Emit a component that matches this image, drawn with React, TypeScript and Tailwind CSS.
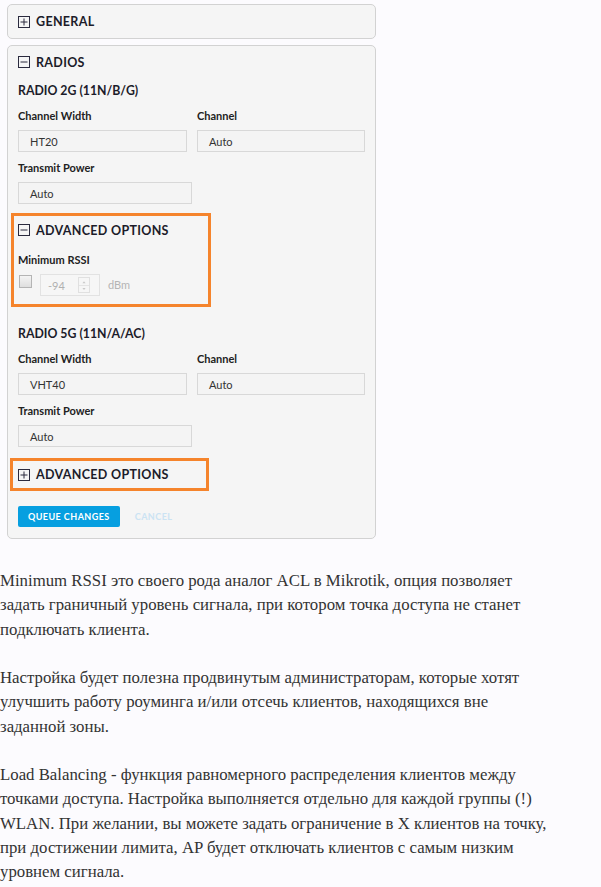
import type { ReactNode } from 'react';

function ToggleIcon({ open }: { open: boolean }) {
  return (
    <svg width="12" height="12" viewBox="0 0 12 12" className="shrink-0">
      <rect x="0.5" y="0.5" width="11" height="11" fill="none" stroke="#2a2a3e" strokeWidth="1" />
      <line x1="2.5" y1="6" x2="9.5" y2="6" stroke="#2a2a3e" strokeWidth="1" />
      {!open && <line x1="6" y1="2.5" x2="6" y2="9.5" stroke="#2a2a3e" strokeWidth="1" />}
    </svg>
  );
}

function SectionTitle({ open, children }: { open: boolean; children: ReactNode }) {
  return (
    <div className="h-[12px] flex items-center gap-[6px] text-[12.5px] font-bold tracking-[0.025em] text-[#1c1c2a] leading-none">
      <ToggleIcon open={open} />
      <span className="pt-[2px]">{children}</span>
    </div>
  );
}

function Label({ children }: { children: ReactNode }) {
  return <div className="h-[12px] flex items-center text-[11px] font-bold text-[#222] leading-none">{children}</div>;
}

function Field({ value, width }: { value: string; width: string }) {
  return (
    <div className={`${width} h-[22px] border border-[#d8d8d8] bg-[#f4f4f4] flex items-center pl-[11px] text-[11px] text-[#333] leading-none`}>
      {value}
    </div>
  );
}

function Radio({ title, width }: { title: string; width: string }) {
  return (
    <div>
      <div className="h-[14px] flex items-center text-[12.3px] font-bold text-[#1c1c2a] leading-none">{title}</div>
      <div className="grid grid-cols-[169px_168px] gap-x-[10px] mt-[11px]">
        <Label>Channel Width</Label>
        <Label>Channel</Label>
        <div className="mt-[9px]">
          <Field value={width} width="w-[169px]" />
        </div>
        <div className="mt-[9px]">
          <Field value="Auto" width="w-[168px]" />
        </div>
      </div>
      <div className="mt-[9px]">
        <Label>Transmit Power</Label>
        <div className="mt-[9px]">
          <Field value="Auto" width="w-[174px]" />
        </div>
      </div>
    </div>
  );
}

export default function App() {
  return (
    <div className="min-h-[887px] bg-[#fcfbfe] pt-[4px]" style={{ fontFamily: 'Lato, "Noto Sans", sans-serif' }}>
      <div className="ml-[7px] w-[369px]">
        <div className="h-[35px] rounded-[5px] border border-[#d2d2d2] bg-[#f5f5f5] px-[10px] flex items-center">
          <SectionTitle open={false}>GENERAL</SectionTitle>
        </div>

        <div className="mt-[6px] rounded-[5px] border border-[#d2d2d2] bg-[#f5f5f5] px-[10px] pt-[10px] pb-[11px]">
          <SectionTitle open>RADIOS</SectionTitle>
          <div className="mt-[16px]">
            <Radio title="RADIO 2G (11N/B/G)" width="HT20" />
          </div>

          <div className="mt-[9px] -ml-[7px] w-[200px] border-[3px] border-[#f5842c] px-[4px] pt-[8px] pb-[8px]">
            <SectionTitle open>ADVANCED OPTIONS</SectionTitle>
            <div className="mt-[17px]">
              <Label>Minimum RSSI</Label>
            </div>
            <div className="mt-[9px] flex items-start gap-[8px]">
              <div className="mt-[1px] ml-px w-[13px] h-[13px] border border-[#b4b4b4] bg-gradient-to-b from-[#f4f4f4] to-[#dedede]" />
              <div className="w-[60px] h-[22px] border border-[#e2e2e2] bg-[#f6f6f6] flex items-center pl-[7px] text-[11px] text-[#b0b0b0] leading-none">
                <span className="flex-1">-94</span>
                <div className="mr-[9px] w-[12px] h-[16px] border border-[#e0e0e0] flex flex-col">
                  <svg viewBox="0 0 12 8" className="w-[10px] h-[7px] mx-auto mt-[0.5px]"><path d="M4 5.5 L6 3 L8 5.5 Z" fill="#c8c8c8" /></svg>
                  <div className="h-px bg-[#e4e4e4]" />
                  <svg viewBox="0 0 12 8" className="w-[10px] h-[7px] mx-auto"><path d="M4 2.5 L6 5 L8 2.5 Z" fill="#c8c8c8" /></svg>
                </div>
              </div>
              <span className="mt-[5px] text-[11px] text-[#b4b4b4] leading-none">dBm</span>
            </div>
          </div>

          <div className="mt-[20px]">
            <Radio title="RADIO 5G (11N/A/AC)" width="VHT40" />
          </div>

          <div className="mt-[11px] -ml-[8px] w-[199px] h-[33px] border-[3px] border-[#f5842c] px-[5px] flex items-center">
            <SectionTitle open={false}>ADVANCED OPTIONS</SectionTitle>
          </div>

          <div className="mt-[15px] flex items-center gap-[15px]">
            <button className="h-[21px] px-[10px] rounded-[2px] bg-[#069fe0] text-white text-[9px] font-bold tracking-[0.05em] leading-none">
              QUEUE CHANGES
            </button>
            <span className="text-[9px] font-bold tracking-[0.05em] text-[#cbe3f3] leading-none">CANCEL</span>
          </div>
        </div>
      </div>

      <div
        className="mt-[30px] text-[16.8px] leading-[24.25px] text-[#333] space-y-[24.25px] whitespace-nowrap"
        style={{ fontFamily: '"Liberation Serif", "DejaVu Serif", serif' }}
      >
        <p>
          Minimum RSSI это своего рода аналог ACL в Mikrotik, опция позволяет
          <br />
          задать граничный уровень сигнала, при котором точка доступа не станет
          <br />
          подключать клиента.
        </p>
        <p>
          Настройка будет полезна продвинутым администраторам, которые хотят
          <br />
          улучшить работу роуминга и/или отсечь клиентов, находящихся вне
          <br />
          заданной зоны.
        </p>
        <p>
          Load Balancing - функция равномерного распределения клиентов между
          <br />
          точками доступа. Настройка выполняется отдельно для каждой группы (!)
          <br />
          WLAN. При желании, вы можете задать ограничение в X клиентов на точку,
          <br />
          при достижении лимита, AP будет отключать клиентов с самым низким
          <br />
          уровнем сигнала.
        </p>
      </div>
    </div>
  );
}
